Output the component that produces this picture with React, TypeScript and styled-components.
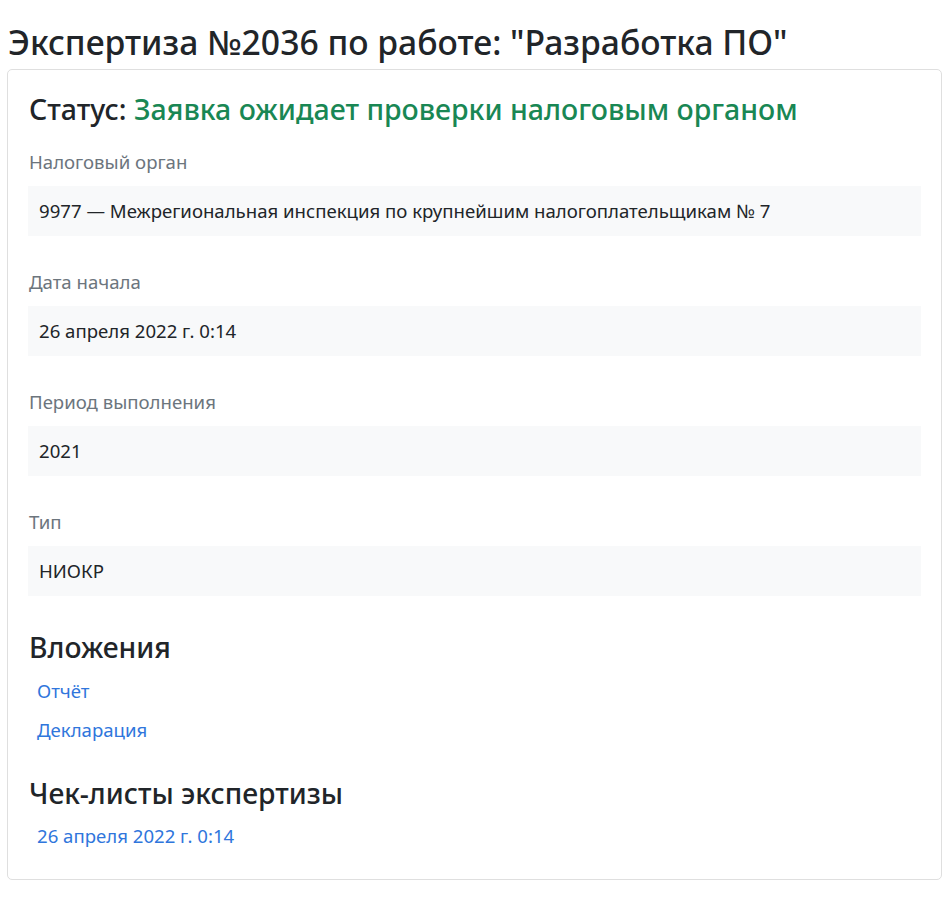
import React from "react";
import styled, { createGlobalStyle } from "styled-components";

const GlobalStyle = createGlobalStyle`
  html, body { margin: 0; padding: 0; background: #fff; }
  body {
    font-family: "Noto Sans", "Liberation Sans", sans-serif;
    color: #212529;
    font-size: 18.6px;
    line-height: 1.5;
  }
`;

const Page = styled.div`
  padding: 24px 6px 20px 7px;
`;

const Title = styled.h2`
  margin: 0 0 9px 1px;
  font-size: 33.7px;
  line-height: 36px;
  font-weight: 500;
`;

const Card = styled.div`
  border: 1px solid #dfdfdf;
  border-radius: 5px;
  padding: 23px 20px 31px 20px;
  display: flex;
  flex-direction: column;
`;

const Status = styled.h3`
  margin: 0 0 25px 1px;
  font-size: 28.5px;
  line-height: 32px;
  font-weight: 500;
`;

const StatusValue = styled.span`
  color: #198754;
`;

const Field = styled.div`
  display: flex;
  flex-direction: column;
  margin-bottom: 34px;
  &:last-of-type { margin-bottom: 30px; }
`;

const Label = styled.div`
  color: #6c757d;
  line-height: 24px;
  margin: 0 0 12px 1px;
`;

const Value = styled.div`
  background: #f8f9fa;
  padding: 13px 11px;
  line-height: 24px;
`;

const Section = styled.h4`
  margin: 0 0 ${(p: { $mb: number }) => p.$mb}px 1px;
  font-size: 28.3px;
  line-height: 34px;
  font-weight: 500;
`;

const Links = styled.div`
  display: flex;
  flex-direction: column;
  gap: 15px;
  padding-left: 9px;
  margin-bottom: ${(p: { $mb?: number }) => p.$mb ?? 0}px;
`;

const Link = styled.a`
  color: #2f76dc;
  text-decoration: none;
  line-height: 24px;
`;

const fields = [
  { label: "Налоговый орган", value: "9977 — Межрегиональная инспекция по крупнейшим налогоплательщикам № 7" },
  { label: "Дата начала", value: "26 апреля 2022 г. 0:14" },
  { label: "Период выполнения", value: "2021" },
  { label: "Тип", value: "НИОКР" },
];

export default function App() {
  return (
    <>
      <GlobalStyle />
      <Page>
        <Title>Экспертиза №2036 по работе: "Разработка ПО"</Title>
        <Card>
          <Status>
            Статус: <StatusValue>Заявка ожидает проверки налоговым органом</StatusValue>
          </Status>
          {fields.map((f) => (
            <Field key={f.label}>
              <Label>{f.label}</Label>
              <Value>{f.value}</Value>
            </Field>
          ))}
          <Section $mb={15}>Вложения</Section>
          <Links $mb={34}>
            <Link href="#">Отчёт</Link>
            <Link href="#">Декларация</Link>
          </Links>
          <Section $mb={14}>Чек-листы экспертизы</Section>
          <Links>
            <Link href="#">26 апреля 2022 г. 0:14</Link>
          </Links>
        </Card>
      </Page>
    </>
  );
}
